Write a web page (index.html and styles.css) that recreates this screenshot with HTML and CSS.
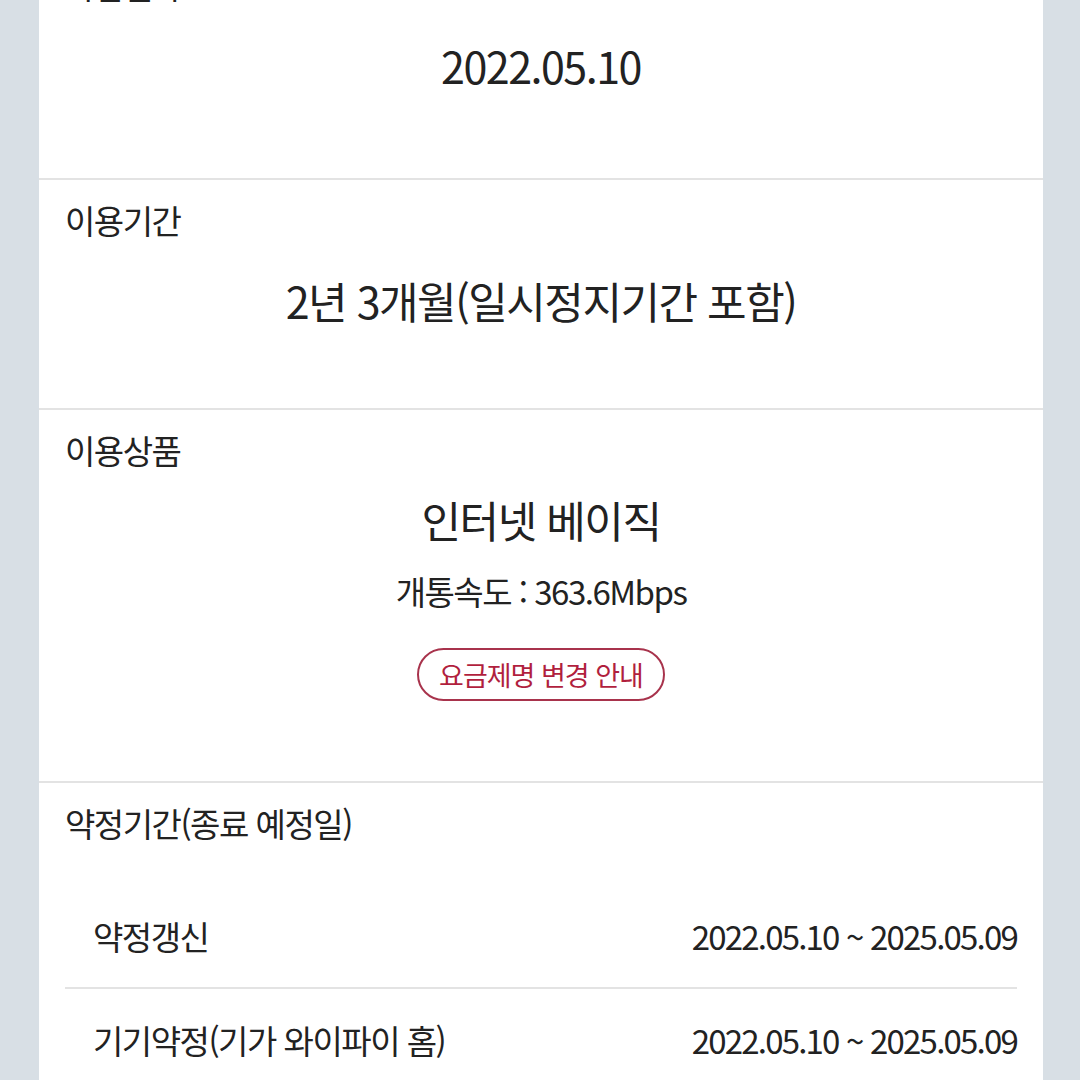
FILE: index.html
```html
<!DOCTYPE html>
<html lang="ko">
<head>
  <meta charset="UTF-8">
  <meta name="viewport" content="width=device-width, initial-scale=1.0">
  <title>가입정보</title>
  <link rel="stylesheet" href="styles.css">
</head>
<body>

<div class="info-card">
    <div class="info-section first">
        <div class="info-label">가입일자</div>
        <div class="info-value">2022.05.10</div>
    </div>

    <div class="info-section">
        <div class="info-label">이용기간</div>
        <div class="info-value">2년 3개월(일시정지기간 포함)</div>
    </div>

    <div class="info-section product">
        <div class="info-label">이용상품</div>
        <div class="info-value">인터넷 베이직</div>
        <div class="info-sub">개통속도 : 363.6Mbps</div>
        <button class="notice-btn">요금제명 변경 안내</button>
    </div>

    <div class="info-section contract">
        <div class="info-label">약정기간(종료 예정일)</div>
        <ul class="contract-list">
            <li class="contract-row">
                <span class="contract-name">약정갱신</span>
                <span class="contract-date">2022.05.10 ~ 2025.05.09</span>
            </li>
            <li class="contract-row">
                <span class="contract-name">기기약정(기가 와이파이 홈)</span>
                <span class="contract-date">2022.05.10 ~ 2025.05.09</span>
            </li>
        </ul>
    </div>
</div>

</body>
</html>
```

FILE: styles.css
```css
/* page */
body {
  margin: 0;
  padding: 0;
  background-color: #d8dfe5;
  font-family: "Noto Sans CJK KR", "Noto Sans", sans-serif;
  color: #222;
  overflow: hidden;
}

.info-card {
  width: 1004px;
  margin: -55px 0 0 39px;
  background-color: #fff;
}

/* each block of the card */
.info-section {
  padding: 20px 26px 84px;
  border-top: 2px solid #e3e3e3;
}

.info-section.first {
  border-top: none;
  padding-bottom: 89px;
}

.info-label {
  font-size: 33px;
  line-height: 40px;
  letter-spacing: -1.5px;
}

.info-value {
  margin-top: 36px;
  font-size: 43px;
  line-height: 48px;
  letter-spacing: -1.5px;
  text-align: center;
}

.product {
  display: flex;
  flex-direction: column;
  align-items: center;
  padding-bottom: 80px;
}

.product .info-label {
  align-self: flex-start;
}

.product .info-value {
  margin-top: 25px;
}

.info-sub {
  margin-top: 28px;
  font-size: 33px;
  line-height: 40px;
  letter-spacing: -1.5px;
}

.notice-btn {
  margin-top: 37px;
  height: 53px;
  padding: 0 20px;
  background-color: #fff;
  border: 2px solid #a8334c;
  border-radius: 27px;
  color: #b11f3e;
  font-family: inherit;
  font-size: 27px;
  letter-spacing: -1px;
}

/* contract rows */
.contract {
  padding-bottom: 0;
}

.contract-list {
  list-style: none;
  margin: 42px 0 0;
  padding: 0;
}

.contract-row {
  display: flex;
  justify-content: space-between;
  align-items: center;
  height: 102px;
  padding-left: 28px;
  border-bottom: 2px solid #e3e3e3;
  font-size: 33px;
  letter-spacing: -1.5px;
}

.contract-date {
  letter-spacing: -1.8px;
}

.contract-row:last-child {
  border-bottom: none;
}
```
